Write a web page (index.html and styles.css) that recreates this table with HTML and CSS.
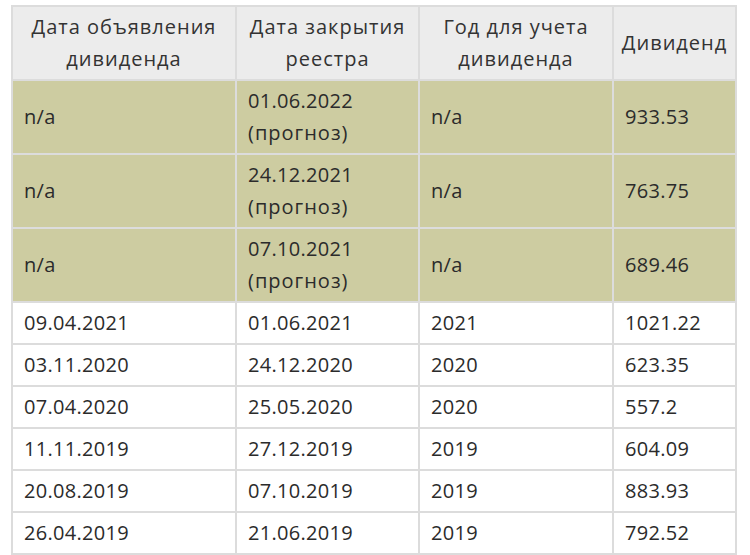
FILE: index.html
```html
<!DOCTYPE html>
<html lang="ru">
<head>
<meta charset="utf-8">
<link rel="stylesheet" href="styles.css">
</head>
<body>
<table class="div-table">
  <colgroup>
    <col class="c1"><col class="c2"><col class="c3"><col class="c4">
  </colgroup>
  <thead>
    <tr>
      <th>Дата объявления дивиденда</th>
      <th>Дата закрытия реестра</th>
      <th>Год для учета дивиденда</th>
      <th>Дивиденд</th>
    </tr>
  </thead>
  <tbody>
    <tr class="forecast"><td>n/a</td><td>01.06.2022<br><span class="note">(прогноз)</span></td><td>n/a</td><td>933.53</td></tr>
    <tr class="forecast"><td>n/a</td><td>24.12.2021<br><span class="note">(прогноз)</span></td><td>n/a</td><td>763.75</td></tr>
    <tr class="forecast"><td>n/a</td><td>07.10.2021<br><span class="note">(прогноз)</span></td><td>n/a</td><td>689.46</td></tr>
    <tr><td>09.04.2021</td><td>01.06.2021</td><td>2021</td><td>1021.22</td></tr>
    <tr><td>03.11.2020</td><td>24.12.2020</td><td>2020</td><td>623.35</td></tr>
    <tr><td>07.04.2020</td><td>25.05.2020</td><td>2020</td><td>557.2</td></tr>
    <tr><td>11.11.2019</td><td>27.12.2019</td><td>2019</td><td>604.09</td></tr>
    <tr><td>20.08.2019</td><td>07.10.2019</td><td>2019</td><td>883.93</td></tr>
    <tr><td>26.04.2019</td><td>21.06.2019</td><td>2019</td><td>792.52</td></tr>
  </tbody>
</table>
</body>
</html>
```
FILE: styles.css
```css
html, body {
  margin: 0;
  padding: 0;
  background: #ffffff;
}
body {
  padding: 5px 0 0 11px;
  font-family: "Open Sans", "Noto Sans", sans-serif;
  font-size: 20px;
  color: #2b2b2b;
}
.div-table {
  border-collapse: collapse;
  table-layout: fixed;
  width: 724px;
}
.c1 { width: 224px; }
.c2 { width: 183px; }
.c3 { width: 194px; }
.c4 { width: 123px; }
.div-table th,
.div-table td {
  border: 2px solid #dcdcdc;
  line-height: 32px;
  padding: 4px 8px 4px 11px;
  vertical-align: middle;
  white-space: nowrap;
  letter-spacing: 0.3px;
}
.div-table th {
  background: #ececec;
  font-weight: 400;
  text-align: center;
  color: #333333;
  white-space: normal;
  padding: 4px 2px;
  letter-spacing: 1px;
}
.div-table td {
  text-align: left;
}
.note {
  letter-spacing: 1px;
}
.forecast td {
  background: #cdcca1;
}
```
